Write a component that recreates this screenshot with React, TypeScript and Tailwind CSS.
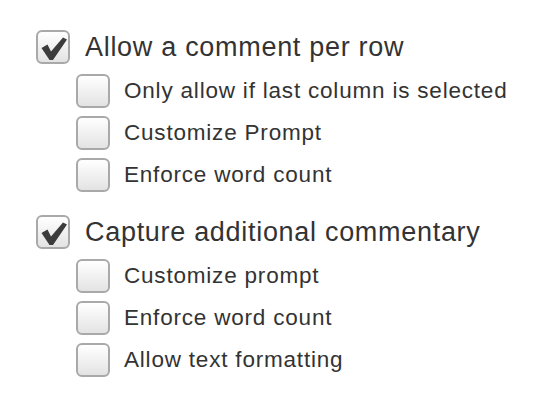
import React from 'react';

interface Option {
  label: string;
  checked?: boolean;
  children: string[];
}

const options: Option[] = [
  {
    label: 'Allow a comment per row',
    checked: true,
    children: ['Only allow if last column is selected', 'Customize Prompt', 'Enforce word count'],
  },
  {
    label: 'Capture additional commentary',
    checked: true,
    children: ['Customize prompt', 'Enforce word count', 'Allow text formatting'],
  },
];

function Box({ checked }: { checked?: boolean }) {
  return (
    <span className="relative flex-shrink-0 w-[34px] h-[34px] rounded-[6px] border-2 border-[#a9a9a9] bg-gradient-to-b from-white to-[#e3e3e3]">
      {checked && (
        <svg viewBox="0 0 30 30" className="absolute inset-0 w-[30px] h-[30px]">
          <path d="M3.5 16 L9.5 12.5 L13 19.5 L25 5.5 L29 7.5 L15 28 L11.5 28 Z" fill="#3c3c3c" />
        </svg>
      )}
    </span>
  );
}

export default function App() {
  return (
    <div
      className="w-[548px] h-[408px] bg-white pt-[26px] pl-[36px] text-[#333]"
      style={{ fontFamily: '"Liberation Sans", Arial, sans-serif' }}
    >
      {options.map((opt, i) => (
        <div key={opt.label} className={i > 0 ? 'mt-[15px]' : ''}>
          <label className="flex items-center gap-[15px] h-[42px]">
            <Box checked={opt.checked} />
            <span className="text-[27px] leading-none tracking-[0.7px]">{opt.label}</span>
          </label>
          <div className="pl-[40px] mt-[2px]">
            {opt.children.map((c) => (
              <label key={c} className="flex items-center gap-[14px] h-[42px]">
                <Box />
                <span className="text-[22.5px] leading-none tracking-[0.8px]">{c}</span>
              </label>
            ))}
          </div>
        </div>
      ))}
    </div>
  );
}
